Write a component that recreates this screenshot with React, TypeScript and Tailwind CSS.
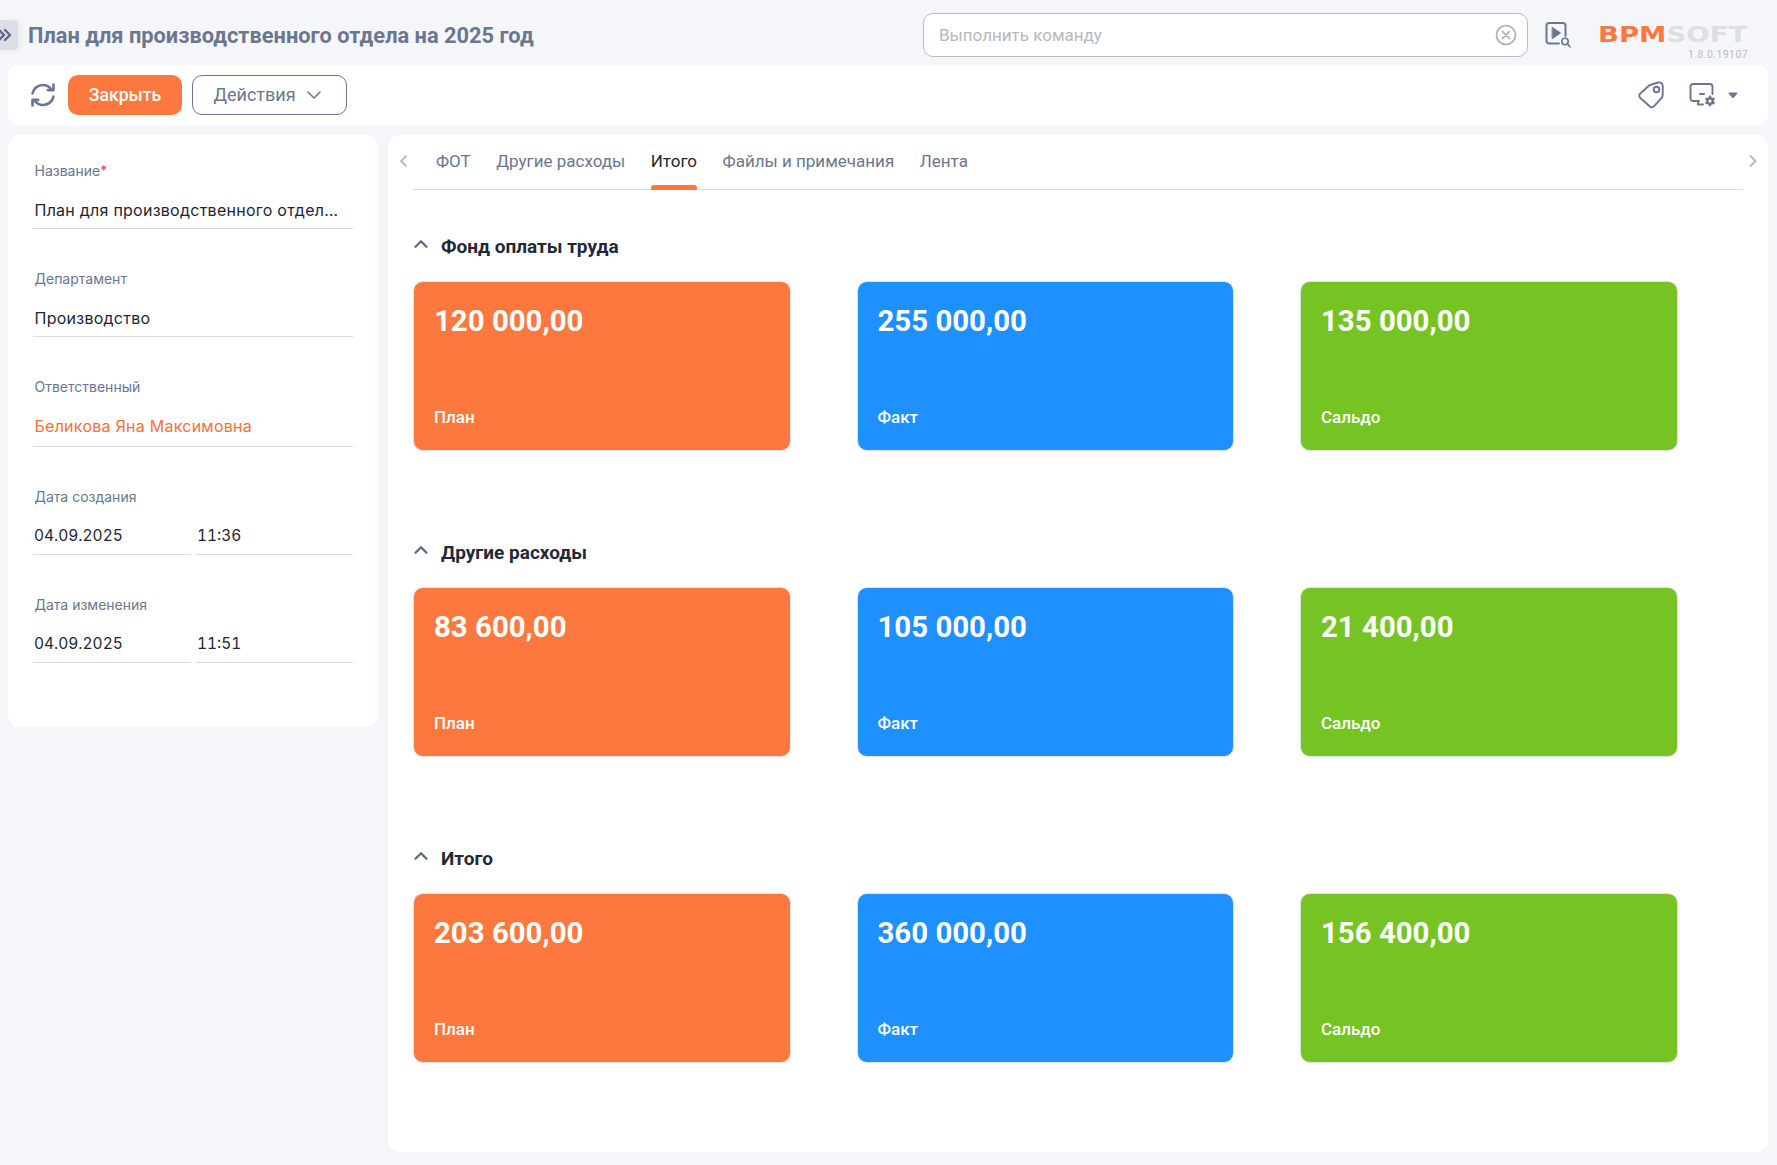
import { ChevronDown, ChevronLeft, ChevronRight, ChevronUp } from "lucide-react";

type Field = {
  label: string;
  value: string;
  time?: string;
  required?: boolean;
  link?: boolean;
};

const fields: Field[] = [
  { label: "Название", value: "План для производственного отдела на 2025 год", required: true },
  { label: "Департамент", value: "Производство" },
  { label: "Ответственный", value: "Беликова Яна Максимовна", link: true },
  { label: "Дата создания", value: "04.09.2025", time: "11:36" },
  { label: "Дата изменения", value: "04.09.2025", time: "11:51" },
];

const tabs = ["ФОТ", "Другие расходы", "Итого", "Файлы и примечания", "Лента"];

const sections = [
  { title: "Фонд оплаты труда", values: ["120 000,00", "255 000,00", "135 000,00"] },
  { title: "Другие расходы", values: ["83 600,00", "105 000,00", "21 400,00"] },
  { title: "Итого", values: ["203 600,00", "360 000,00", "156 400,00"] },
];

const cards = [
  { label: "План", color: "bg-[#fc783e]" },
  { label: "Факт", color: "bg-[#1e90ff]" },
  { label: "Сальдо", color: "bg-[#76c423]" },
];

function RefreshIcon() {
  return (
    <svg width="26" height="26" viewBox="0 0 26 26" fill="none" stroke="#6b7690" strokeWidth="2.6" strokeLinecap="round" strokeLinejoin="round">
      <path d="M2.5 11.5C3.5 6.5 7.8 3 13 3c3.6 0 6.4 1.6 8.6 4.6" />
      <path d="M23.5 2.5v5.6h-5.6" />
      <path d="M23.5 14.5C22.5 19.5 18.2 23 13 23c-3.6 0-6.4-1.6-8.6-4.6" />
      <path d="M2.5 23.5v-5.6h5.6" />
    </svg>
  );
}

function CommandIcon() {
  return (
    <svg width="26" height="26" viewBox="0 0 26 26" fill="none" stroke="#6b7690" strokeLinecap="round">
      <path d="M14 21.5H4a2.5 2.5 0 0 1-2.5-2.5V3.5A2.5 2.5 0 0 1 4 1h14a2.5 2.5 0 0 1 2.5 2.5V14" strokeWidth="2" />
      <path d="M7.5 5.5 15.5 11l-8 5.5z" fill="#6b7690" strokeWidth="1" strokeLinejoin="round" />
      <circle cx="20" cy="19.5" r="3.2" strokeWidth="1.6" />
      <path d="m22.5 22 2.5 2.8" strokeWidth="1.6" />
    </svg>
  );
}

function TagIcon() {
  return (
    <svg width="26" height="28" viewBox="0 0 26 28" fill="none" stroke="#6b7690" strokeWidth="1.9" strokeLinejoin="round">
      <path d="M13.5 3.5 20 1.5c2.5-.6 4.8 1 4.8 3.7l-.1 9c0 1.2-.4 2.1-1.2 3l-7.4 8c-1.3 1.4-3.2 1.4-4.5.1l-9.3-8.3c-1.3-1.3-1.3-3.2 0-4.5l8-7.3c1-.9 2-1.4 3.2-1.7Z" />
      <circle cx="18.5" cy="8.500" r="2.8" />
    </svg>
  );
}

function ScreenGearIcon() {
  return (
    <svg width="28" height="26" viewBox="0 0 28 26" fill="none" stroke="#6b7690" strokeLinecap="round">
      <path d="M10 19H4a2.5 2.5 0 0 1-2.5-2.5v-12A2.5 2.5 0 0 1 4 2h17a2.5 2.5 0 0 1 2.5 2.5V12" strokeWidth="1.9" />
      <path d="M11 12h4M9 19v3.5h5" strokeWidth="1.9" />
      <circle cx="21" cy="19" r="4" fill="#6b7690" stroke="none" />
      <circle cx="21" cy="19" r="1.5" fill="#fff" stroke="none" />
      <path d="M21 13.8v1.800M21 22.4v1.800M16.500 16.400l1.600.9M23.900 20.700l1.600.9M16.500 21.600l1.600-.9M23.900 17.300l1.600-.9" strokeWidth="2.2" strokeLinecap="butt" />
    </svg>
  );
}

function ClearIcon() {
  return (
    <svg width="22" height="22" viewBox="0 0 22 22" fill="none" stroke="#a9adb5" strokeWidth="1.7" strokeLinecap="round">
      <circle cx="11" cy="11" r="9.5" />
      <path d="m7.5 7.5 7 7M14.5 7.5l-7 7" />
    </svg>
  );
}

function Logo() {
  return (
    <div className="flex w-[150px] flex-col items-end">
      <div className="h-[22px] w-full">
        <div className="flex w-[119px] origin-left scale-x-[1.25] font-['DejaVu_Sans',sans-serif] text-[22px] leading-[22px] font-bold whitespace-nowrap">
          <span className="text-[#fc783e]">BPM</span>
          <span className="text-[#dcdfe4]">SOFT</span>
        </div>
      </div>
      <div className="mt-[3px] text-[10.5px] leading-3 tracking-[0.4px] text-[#b9bcc2]">1.8.0.19107</div>
    </div>
  );
}

function SideField({ field }: { field: Field }) {
  const valueColor = field.link ? "text-[#fc6f35]" : "text-[#1f2633]";
  return (
    <div>
      <div className="flex h-5 items-center pl-[1.5px] text-sm text-[#6b7690]">
        {field.label}
        {field.required && <span className="text-[#f5394f]">*</span>}
      </div>
      {field.time ? (
        <div className="flex gap-[5px]">
          <div className="h-12 w-[158px] border-b border-[#d9dbe3] pt-[19px] pl-[1px] text-[15.5px] leading-5 text-[#1f2633] tabular-nums">{field.value}</div>
          <div className="h-12 flex-1 border-b border-[#d9dbe3] pt-[19px] pl-[1px] text-[15.5px] leading-5 text-[#1f2633] tabular-nums">{field.time}</div>
        </div>
      ) : (
        <div className={`truncate border-b border-[#d9dbe3] pt-[19px] pl-[1.5px] pr-[12px] text-base leading-5 tracking-[0.25px] ${field.link ? "h-[50px]" : "h-12"} ${valueColor}`}>{field.value}</div>
      )}
    </div>
  );
}

export default function App() {
  return (
    <div className="h-[1165px] w-[1777px] overflow-hidden bg-[#f5f6fa] font-[Roboto,sans-serif]">
      <header className="flex h-[65px] items-center pt-[5px] pr-[29px]">
        <div className="flex h-[30px] w-[18px] items-center overflow-hidden rounded-r-[4px] bg-[#dcdfe8] text-[#5f6b85] shadow-[2px_0_6px_rgba(0,0,0,0.06)]">
          <svg width="16" height="16" viewBox="0 0 16 16" fill="none" stroke="currentColor" strokeWidth="2.4" strokeLinecap="round" strokeLinejoin="round" className="-ml-[3px] shrink-0">
            <path d="M2 3l5 5-5 5M8 3l5 5-5 5" />
          </svg>
        </div>
        <h1 className="mt-[2px] ml-[10px] text-[21.8px] font-bold whitespace-nowrap text-[#6b7690]">План для производственного отдела на 2025 год</h1>
        <div className="ml-auto flex h-[44px] w-[605px] items-center justify-between rounded-[10px] border border-[#b9bcc4] bg-white pr-[10px] pl-[15px]">
          <span className="pt-px text-[17px] text-[#b5b8bf]">Выполнить команду</span>
          <ClearIcon />
        </div>
        <div className="ml-[17px]">
          <CommandIcon />
        </div>
        <div className="mt-[14px] ml-[27px]">
          <Logo />
        </div>
      </header>

      <div className="mx-2 flex h-[60px] w-[1760px] items-center rounded-[10px] bg-white pr-[30px] pl-[22px]">
        <RefreshIcon />
        <button className="ml-[12px] h-10 w-[114px] rounded-[10px] bg-[#fc783e] text-[17.6px] font-medium text-white">Закрыть</button>
        <button className="ml-[10px] flex h-10 w-[155px] items-center justify-center gap-[6px] rounded-[10px] border border-[#6b7690] text-lg text-[#6b7690]">
          Действия
          <ChevronDown size={24} strokeWidth={1.6} />
        </button>
        <div className="ml-auto flex items-center gap-[25px]">
          <TagIcon />
          <div className="flex items-center gap-[11px]">
            <ScreenGearIcon />
            <svg width="10" height="7" viewBox="0 0 10 7" fill="#6b7690">
              <path d="M1 .5h8a.6.6 0 0 1 .4 1L5.4 6a.6.6 0 0 1-.8 0L.6 1.5a.6.6 0 0 1 .4-1Z" />
            </svg>
          </div>
        </div>
      </div>

      <div className="mt-[10px] ml-2 flex items-start gap-[10px]">
        <aside className="flex w-[370px] flex-col gap-10 rounded-[12px] bg-white pt-[26px] pr-[25px] pb-16 pl-[25px] font-[Inter,sans-serif]">
          {fields.map((field) => (
            <SideField field={field} key={field.label} />
          ))}
        </aside>

        <main className="h-[1017px] w-[1380px] rounded-[12px] bg-white">
          <div className="flex h-[55px] items-stretch">
            <div className="flex w-[25px] items-center pb-1 pl-[6px] text-[#b9bcc2]">
              <ChevronLeft size={20} strokeWidth={2.5} />
            </div>
            <nav className="flex flex-1 gap-[25.5px] border-b border-[#d9dbe0] pl-[23px]">
              {tabs.map((tab) => {
                const active = tab === "Итого";
                return (
                  <div className="flex flex-col justify-between" key={tab}>
                    <span className={`pt-[13px] text-[17px] leading-[26px] ${active ? "text-[#1f2633]" : "text-[#6b7690]"}`}>{tab}</span>
                    {active && <span className="-mb-px h-[5px] rounded-t-[3px] rounded-b-[1px] bg-[#fc783e]" />}
                  </div>
                );
              })}
            </nav>
            <div className="flex w-[25px] items-center justify-start pb-1 text-[#b9bcc2]">
              <ChevronRight size={20} strokeWidth={2.5} />
            </div>
          </div>

          <div className="flex flex-col gap-[87px] pt-[42px] pl-[25px]">
            {sections.map((section) => (
              <section key={section.title}>
                <div className="mb-[19px] flex h-[30px] items-center">
                  <ChevronUp size={22} strokeWidth={2.6} className="-ml-[3px] mb-[6px] text-[#5f6b85]" />
                  <h2 className="ml-[9px] text-[19px] font-bold text-[#1f2937]">{section.title}</h2>
                </div>
                <div className="flex gap-[66px]">
                  {cards.map((card, i) => (
                    <div className={`flex h-[170px] w-[377.5px] flex-col justify-between rounded-[10px] border border-[#e3e3e3] px-5 pt-[19px] pb-[21px] text-white ${card.color}`} key={card.label}>
                      <div className="text-[29.4px] leading-[40px] font-bold">{section.values[i]}</div>
                      <div className="text-[17px] leading-6 font-medium">{card.label}</div>
                    </div>
                  ))}
                </div>
              </section>
            ))}
          </div>
        </main>
      </div>
    </div>
  );
}
